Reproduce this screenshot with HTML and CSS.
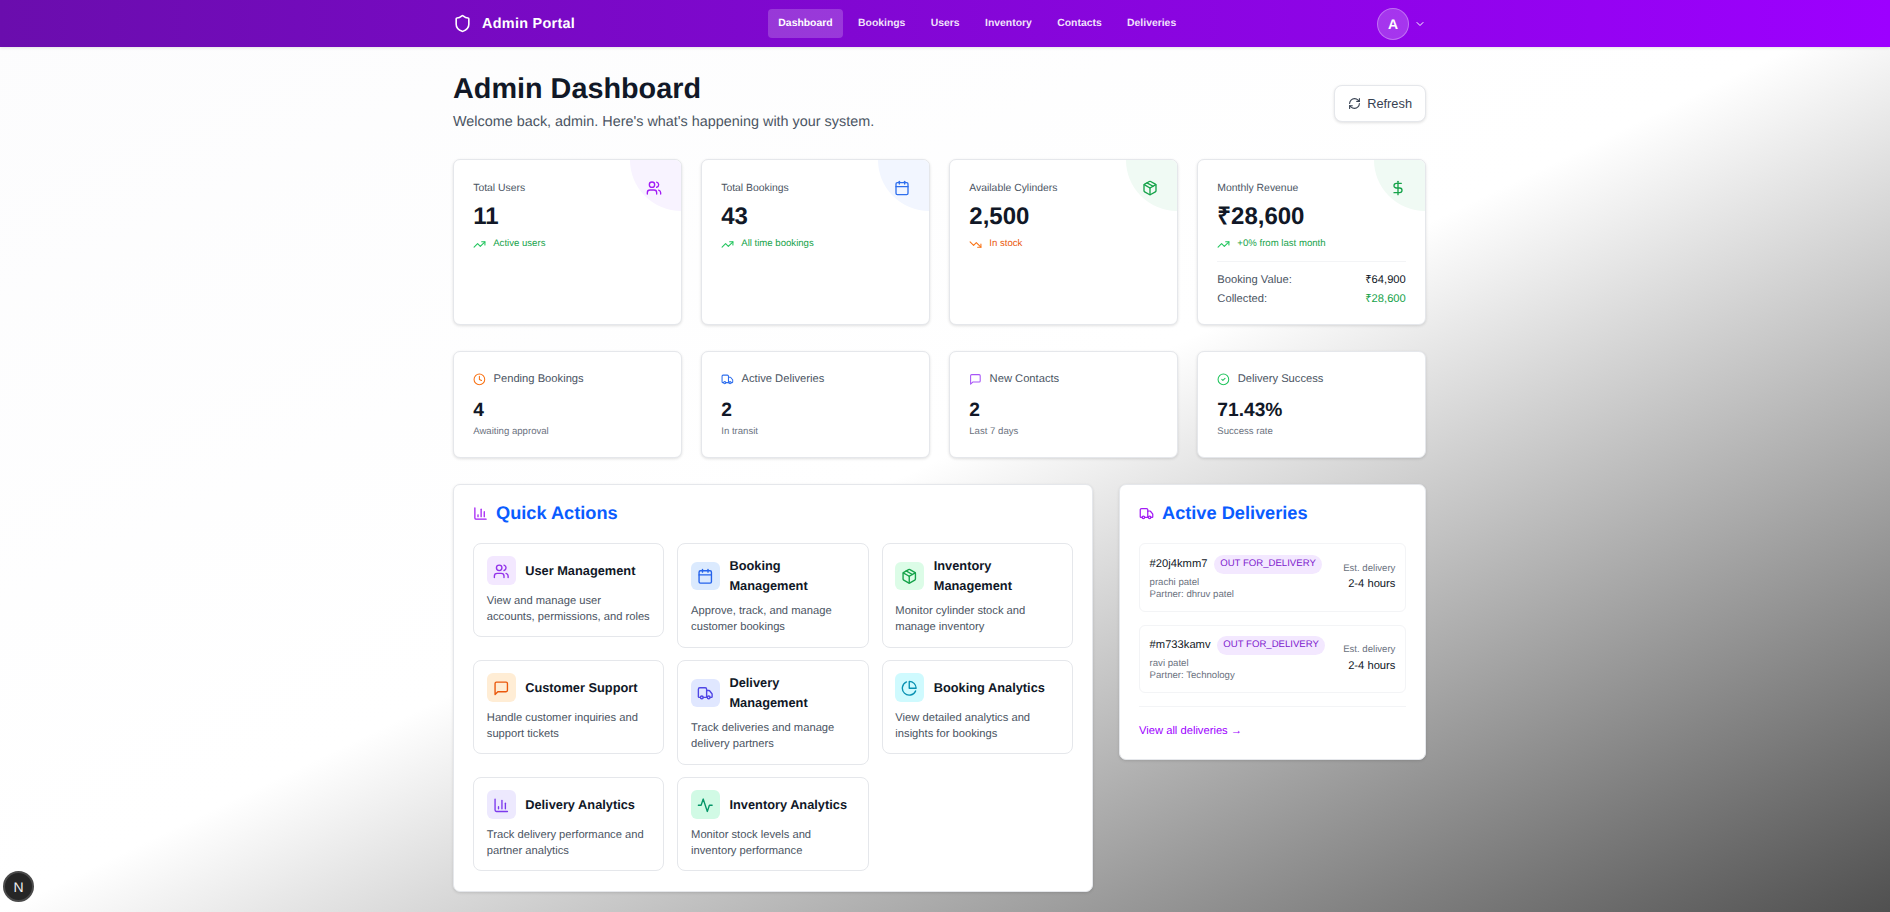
FILE: index.html
```html
<!DOCTYPE html>
<html>
<head>
  <title>Admin Dashboard</title>
  <link rel="stylesheet" href="styles.css">
</head>
<body>
  <svg class="sprite" xmlns="http://www.w3.org/2000/svg">
    <symbol id="i-shield" viewBox="0 0 24 24"><path d="M20 13c0 5-3.5 7.5-7.66 8.95a1 1 0 0 1-.67-.01C7.5 20.5 4 18 4 13V6a1 1 0 0 1 1-1c2 0 4.5-1.2 6.24-2.72a1.17 1.17 0 0 1 1.52 0C14.51 3.81 17 5 19 5a1 1 0 0 1 1 1z"/></symbol>
    <symbol id="i-chevron" viewBox="0 0 24 24"><path d="m6 9 6 6 6-6"/></symbol>
    <symbol id="i-refresh" viewBox="0 0 24 24"><path d="M3 12a9 9 0 0 1 9-9 9.75 9.75 0 0 1 6.74 2.74L21 8"/><path d="M21 3v5h-5"/><path d="M21 12a9 9 0 0 1-9 9 9.75 9.75 0 0 1-6.74-2.74L3 16"/><path d="M8 16H3v5"/></symbol>
    <symbol id="i-users" viewBox="0 0 24 24"><path d="M16 21v-2a4 4 0 0 0-4-4H6a4 4 0 0 0-4 4v2"/><circle cx="9" cy="7" r="4"/><path d="M22 21v-2a4 4 0 0 0-3-3.87"/><path d="M16 3.13a4 4 0 0 1 0 7.75"/></symbol>
    <symbol id="i-calendar" viewBox="0 0 24 24"><path d="M8 2v4"/><path d="M16 2v4"/><rect x="3" y="4" width="18" height="18" rx="2"/><path d="M3 10h18"/></symbol>
    <symbol id="i-package" viewBox="0 0 24 24"><path d="m7.5 4.27 9 5.15"/><path d="M21 8a2 2 0 0 0-1-1.73l-7-4a2 2 0 0 0-2 0l-7 4A2 2 0 0 0 3 8v8a2 2 0 0 0 1 1.73l7 4a2 2 0 0 0 2 0l7-4A2 2 0 0 0 21 16Z"/><path d="m3.3 7 8.7 5 8.7-5"/><path d="M12 22V12"/></symbol>
    <symbol id="i-dollar" viewBox="0 0 24 24"><path d="M12 2v20"/><path d="M17 5H9.5a3.5 3.5 0 0 0 0 7h5a3.5 3.5 0 0 1 0 7H6"/></symbol>
    <symbol id="i-up" viewBox="0 0 24 24"><path d="M22 7l-8.5 8.5-5-5L2 17"/><path d="M16 7h6v6"/></symbol>
    <symbol id="i-down" viewBox="0 0 24 24"><path d="M22 17l-8.5-8.5-5 5L2 7"/><path d="M16 17h6v-6"/></symbol>
    <symbol id="i-clock" viewBox="0 0 24 24"><circle cx="12" cy="12" r="10"/><path d="M12 6v6l4 2"/></symbol>
    <symbol id="i-truck" viewBox="0 0 24 24"><path d="M14 18V6a2 2 0 0 0-2-2H4a2 2 0 0 0-2 2v11a1 1 0 0 0 1 1h2"/><path d="M15 18H9"/><path d="M19 18h2a1 1 0 0 0 1-1v-3.65a1 1 0 0 0-.22-.624l-3.48-4.35A1 1 0 0 0 17.52 8H14"/><circle cx="17" cy="18" r="2"/><circle cx="7" cy="18" r="2"/></symbol>
    <symbol id="i-message" viewBox="0 0 24 24"><path d="M21 15a2 2 0 0 1-2 2H7l-4 4V5a2 2 0 0 1 2-2h14a2 2 0 0 1 2 2z"/></symbol>
    <symbol id="i-check" viewBox="0 0 24 24"><circle cx="12" cy="12" r="10"/><path d="m9 12 2 2 4-4"/></symbol>
    <symbol id="i-bars" viewBox="0 0 24 24"><path d="M3 3v16a2 2 0 0 0 2 2h16"/><path d="M18 17V9"/><path d="M13 17V5"/><path d="M8 17v-3"/></symbol>
    <symbol id="i-pie" viewBox="0 0 24 24"><path d="M21.21 15.89A10 10 0 1 1 8 2.83"/><path d="M22 12A10 10 0 0 0 12 2v10z"/></symbol>
    <symbol id="i-activity" viewBox="0 0 24 24"><path d="M22 12h-4l-3 9L9 3l-3 9H2"/></symbol>
  </svg>

  <header class="topbar">
    <div class="topbar-inner">
      <div class="brand">
        <svg class="icon brand-icon"><use href="#i-shield"/></svg>
        <span>Admin Portal</span>
      </div>
      <nav class="nav">
        <a class="nav-link active">Dashboard</a>
        <a class="nav-link">Bookings</a>
        <a class="nav-link">Users</a>
        <a class="nav-link">Inventory</a>
        <a class="nav-link">Contacts</a>
        <a class="nav-link">Deliveries</a>
      </nav>
      <div class="account">
        <div class="avatar">A</div>
        <svg class="icon chevron"><use href="#i-chevron"/></svg>
      </div>
    </div>
  </header>

  <main class="main">
    <div class="page-head">
      <div>
        <h1>Admin Dashboard</h1>
        <p class="welcome">Welcome back, admin. Here's what's happening with your system.</p>
      </div>
      <button class="refresh">
        <svg class="icon"><use href="#i-refresh"/></svg>
        Refresh
      </button>
    </div>

    <section class="stats">
      <div class="card stat">
        <div class="corner c-purple"></div>
        <div class="stat-top">
          <span class="stat-label">Total Users</span>
          <svg class="icon stat-icon t-purple"><use href="#i-users"/></svg>
        </div>
        <div class="stat-value">11</div>
        <div class="trend good"><svg class="icon t-green"><use href="#i-up"/></svg>Active users</div>
      </div>
      <div class="card stat">
        <div class="corner c-blue"></div>
        <div class="stat-top">
          <span class="stat-label">Total Bookings</span>
          <svg class="icon stat-icon t-blue"><use href="#i-calendar"/></svg>
        </div>
        <div class="stat-value">43</div>
        <div class="trend good"><svg class="icon t-green"><use href="#i-up"/></svg>All time bookings</div>
      </div>
      <div class="card stat">
        <div class="corner c-green"></div>
        <div class="stat-top">
          <span class="stat-label">Available Cylinders</span>
          <svg class="icon stat-icon t-darkgreen"><use href="#i-package"/></svg>
        </div>
        <div class="stat-value">2,500</div>
        <div class="trend bad"><svg class="icon t-orange"><use href="#i-down"/></svg>In stock</div>
      </div>
      <div class="card stat">
        <div class="corner c-green"></div>
        <div class="stat-top">
          <span class="stat-label">Monthly Revenue</span>
          <svg class="icon stat-icon t-darkgreen"><use href="#i-dollar"/></svg>
        </div>
        <div class="stat-value">₹28,600</div>
        <div class="trend good"><svg class="icon t-green"><use href="#i-up"/></svg>+0% from last month</div>
        <div class="revenue">
          <div class="revenue-row"><span>Booking Value:</span><span class="amount">₹64,900</span></div>
          <div class="revenue-row"><span>Collected:</span><span class="amount collected">₹28,600</span></div>
        </div>
      </div>
    </section>

    <section class="stats">
      <div class="card mini">
        <div class="mini-label"><svg class="icon t-orange"><use href="#i-clock"/></svg>Pending Bookings</div>
        <div class="mini-value">4</div>
        <div class="mini-note">Awaiting approval</div>
      </div>
      <div class="card mini">
        <div class="mini-label"><svg class="icon t-blue"><use href="#i-truck"/></svg>Active Deliveries</div>
        <div class="mini-value">2</div>
        <div class="mini-note">In transit</div>
      </div>
      <div class="card mini">
        <div class="mini-label"><svg class="icon t-lilac"><use href="#i-message"/></svg>New Contacts</div>
        <div class="mini-value">2</div>
        <div class="mini-note">Last 7 days</div>
      </div>
      <div class="card mini">
        <div class="mini-label"><svg class="icon t-green"><use href="#i-check"/></svg>Delivery Success</div>
        <div class="mini-value">71.43%</div>
        <div class="mini-note">Success rate</div>
      </div>
    </section>

    <section class="lower">
      <div class="card panel panel-wide">
        <h2 class="panel-title"><svg class="icon t-purple"><use href="#i-bars"/></svg>Quick Actions</h2>
        <div class="actions">
          <div class="action">
            <div class="action-head">
              <div class="action-icon a-purple"><svg class="icon"><use href="#i-users"/></svg></div>
              <h3>User Management</h3>
            </div>
            <p>View and manage user accounts, permissions, and roles</p>
          </div>
          <div class="action">
            <div class="action-head">
              <div class="action-icon a-blue"><svg class="icon"><use href="#i-calendar"/></svg></div>
              <h3>Booking Management</h3>
            </div>
            <p>Approve, track, and manage customer bookings</p>
          </div>
          <div class="action">
            <div class="action-head">
              <div class="action-icon a-green"><svg class="icon"><use href="#i-package"/></svg></div>
              <h3>Inventory Management</h3>
            </div>
            <p>Monitor cylinder stock and manage inventory</p>
          </div>
          <div class="action">
            <div class="action-head">
              <div class="action-icon a-orange"><svg class="icon"><use href="#i-message"/></svg></div>
              <h3>Customer Support</h3>
            </div>
            <p>Handle customer inquiries and support tickets</p>
          </div>
          <div class="action">
            <div class="action-head">
              <div class="action-icon a-indigo"><svg class="icon"><use href="#i-truck"/></svg></div>
              <h3>Delivery Management</h3>
            </div>
            <p>Track deliveries and manage delivery partners</p>
          </div>
          <div class="action">
            <div class="action-head">
              <div class="action-icon a-cyan"><svg class="icon"><use href="#i-pie"/></svg></div>
              <h3>Booking Analytics</h3>
            </div>
            <p>View detailed analytics and insights for bookings</p>
          </div>
          <div class="action">
            <div class="action-head">
              <div class="action-icon a-violet"><svg class="icon"><use href="#i-bars"/></svg></div>
              <h3>Delivery Analytics</h3>
            </div>
            <p>Track delivery performance and partner analytics</p>
          </div>
          <div class="action">
            <div class="action-head">
              <div class="action-icon a-mint"><svg class="icon"><use href="#i-activity"/></svg></div>
              <h3>Inventory Analytics</h3>
            </div>
            <p>Monitor stock levels and inventory performance</p>
          </div>
        </div>
      </div>

      <div class="card panel">
        <h2 class="panel-title"><svg class="icon t-purple"><use href="#i-truck"/></svg>Active Deliveries</h2>
        <div class="deliveries">
          <div class="delivery">
            <div>
              <div class="delivery-top"><span class="delivery-id">#20j4kmm7</span><span class="pill">OUT FOR_DELIVERY</span></div>
              <div class="delivery-meta">prachi patel</div>
              <div class="delivery-meta">Partner: dhruv patel</div>
            </div>
            <div class="eta">
              <div class="eta-label">Est. delivery</div>
              <div class="eta-value">2-4 hours</div>
            </div>
          </div>
          <div class="delivery">
            <div>
              <div class="delivery-top"><span class="delivery-id">#m733kamv</span><span class="pill">OUT FOR_DELIVERY</span></div>
              <div class="delivery-meta">ravi patel</div>
              <div class="delivery-meta">Partner: Technology</div>
            </div>
            <div class="eta">
              <div class="eta-label">Est. delivery</div>
              <div class="eta-value">2-4 hours</div>
            </div>
          </div>
        </div>
        <div class="view-all"><a>View all deliveries →</a></div>
      </div>
    </section>
  </main>

  <div class="dev-badge">N</div>
</body>
</html>
```

FILE: styles.css
```css
html {
  font-size: 12.8px;
}

body {
  margin: 0;
  min-height: 912px;
  box-sizing: border-box;
  padding-right: 11px;
  font-family: "Liberation Sans", Arial, sans-serif;
  text-rendering: geometricPrecision;
  color: #111827;
  background: linear-gradient(to bottom right, #fcfcfd 0%, #ffffff 50%, #505050 100%);
  overflow: hidden;
}

h1, h2, h3, p {
  margin: 0;
}

.sprite {
  display: none;
}

.icon {
  width: 1rem;
  height: 1rem;
  fill: none;
  stroke: currentColor;
  stroke-width: 2;
  stroke-linecap: round;
  stroke-linejoin: round;
  flex-shrink: 0;
}

.t-purple { color: #a21cf5; }
.t-lilac { color: #a855f7; }
.t-blue { color: #2f6fed; }
.t-green { color: #22c55e; }
.t-darkgreen { color: #16a34a; }
.t-orange { color: #f97316; }

/* top bar */
.topbar {
  height: 47px;
  margin-right: -11px;
  padding-right: 11px;
  background: linear-gradient(90deg, #6a0dad, #9d00ff);
  box-shadow: 0 1px 3px rgba(0, 0, 0, 0.1);
  color: #fff;
}

.topbar-inner {
  width: 973px;
  height: 100%;
  margin: 0 auto;
  display: flex;
  align-items: center;
  justify-content: space-between;
}

.brand {
  display: flex;
  align-items: center;
  gap: 10px;
  font-size: 14.4px;
  font-weight: bold;
  letter-spacing: 0.3px;
}

.brand-icon {
  width: 19px;
  height: 19px;
}

.nav {
  display: flex;
  align-items: center;
  gap: 5.4px;
  margin-left: 2.4px;
}

.nav-link {
  padding: 0 10px;
  height: 29px;
  line-height: 30px;
  border-radius: 4px;
  font-size: 10.4px;
  font-weight: bold;
  color: rgba(255, 255, 255, 0.9);
}

.nav-link.active {
  background: rgba(255, 255, 255, 0.2);
  color: #fff;
}

.account {
  display: flex;
  align-items: center;
  gap: 5px;
}

.avatar {
  box-sizing: border-box;
  width: 32px;
  height: 32px;
  border-radius: 50%;
  border: 1px solid rgba(255, 255, 255, 0.3);
  background: rgba(255, 255, 255, 0.2);
  display: flex;
  align-items: center;
  justify-content: center;
  font-size: 14px;
  font-weight: bold;
}

.chevron {
  width: 12px;
  height: 12px;
}

/* page */
.main {
  width: 973px;
  margin: 0 auto;
  padding-top: 24.5px;
}

.page-head {
  display: flex;
  align-items: center;
  justify-content: space-between;
  margin-bottom: 26.5px;
}

h1 {
  font-size: 28.8px;
  line-height: 34.6px;
  font-weight: bold;
  color: #111827;
}

.welcome {
  margin-top: 6px;
  font-size: 14.4px;
  line-height: 20px;
  color: #4b5563;
}

.refresh {
  display: flex;
  align-items: center;
  gap: 6px;
  height: 36.5px;
  padding: 0 13px;
  margin-top: 3px;
  border: 1px solid #e5e7eb;
  border-radius: 8px;
  background: #fff;
  box-shadow: 0 1px 3px rgba(0, 0, 0, 0.12);
  font-family: inherit;
  font-size: 12.8px;
  color: #374151;
}

.refresh .icon {
  width: 13px;
  height: 13px;
}

.card {
  box-sizing: border-box;
  background: #fff;
  border: 1px solid #e5e7eb;
  border-radius: 7px;
  box-shadow: 0 1px 3px rgba(0, 0, 0, 0.12);
}

.stats {
  display: grid;
  grid-template-columns: repeat(4, 1fr);
  gap: 1.5rem;
  margin-bottom: 26px;
}

.stat {
  position: relative;
  overflow: hidden;
  padding: 20.6px 19.2px 17.4px;
}

.corner {
  position: absolute;
  top: 0;
  right: 0;
  width: 4rem;
  height: 4rem;
  border-bottom-left-radius: 100%;
}

.c-purple { background: #f8f3ff; }
.c-blue { background: #f2f6ff; }
.c-green { background: #f0faf4; }

.stat-top {
  position: relative;
  display: flex;
  align-items: center;
  justify-content: space-between;
  height: 16px;
}

.stat-label {
  font-size: 10.4px;
  color: #4b5563;
}

.stat-icon {
  width: 16px;
  height: 16px;
}

.stat-value {
  margin-top: 5.5px;
  font-size: 24px;
  line-height: 29px;
  font-weight: bold;
}

.trend {
  display: flex;
  align-items: center;
  gap: 7px;
  margin-top: 6.9px;
  font-size: 9.6px;
  line-height: 12.8px;
}

.trend .icon {
  width: 13px;
  height: 13px;
}

.good { color: #16a34a; }
.bad { color: #ea580c; }

.revenue {
  margin-top: 10px;
  padding-top: 10.5px;
  border-top: 1px solid #f3f4f6;
  display: flex;
  flex-direction: column;
  gap: 3px;
}

.revenue-row {
  display: flex;
  justify-content: space-between;
  font-size: 11.2px;
  line-height: 16px;
  color: #4b5563;
}

.amount {
  color: #111827;
}

.amount.collected {
  color: #16a34a;
}

.mini {
  padding: 20px 19.2px 18px;
}

.mini-label {
  display: flex;
  align-items: center;
  gap: 7.5px;
  font-size: 11.2px;
  line-height: 14px;
  color: #4b5563;
}

.mini-label .icon {
  width: 12.8px;
  height: 12.8px;
}

.mini-value {
  margin-top: 14px;
  font-size: 19.2px;
  line-height: 22px;
  font-weight: bold;
}

.mini-note {
  margin-top: 4px;
  font-size: 9.6px;
  line-height: 12.8px;
  color: #6b7280;
}

/* lower panels */
.lower {
  display: grid;
  grid-template-columns: repeat(3, 1fr);
  gap: 26px;
  align-items: start;
}

.panel {
  padding: 19px;
}

.panel-wide {
  grid-column: span 2;
  padding-bottom: 20px;
}

.panel-title {
  display: flex;
  align-items: center;
  gap: 8px;
  margin-bottom: 20px;
  font-size: 18.2px;
  line-height: 19.2px;
  font-weight: bold;
  color: #0a5cff;
}

.panel-title .icon {
  width: 15px;
  height: 15px;
}

.actions {
  display: grid;
  grid-template-columns: repeat(3, 1fr);
  gap: 12.9px 12.8px;
  align-items: start;
}

.action {
  box-sizing: border-box;
  padding: 12px 12.8px 11.5px;
  border: 1px solid #e5e7eb;
  border-radius: 8px;
  background: #fff;
}

.action-head {
  display: flex;
  align-items: center;
  gap: 9.6px;
  margin-bottom: 7.4px;
}

.action-head h3 {
  font-size: 12.8px;
  line-height: 19.6px;
  font-weight: bold;
  color: #111827;
}

.action-icon {
  width: 28.8px;
  height: 28.8px;
  border-radius: 6px;
  display: flex;
  align-items: center;
  justify-content: center;
  flex-shrink: 0;
}

.action-icon .icon {
  width: 16.5px;
  height: 16.5px;
}

.action p {
  font-size: 11.2px;
  line-height: 16px;
  color: #4b5563;
}

.a-purple { background: #f3e8ff; color: #9333ea; }
.a-blue { background: #dbeafe; color: #2563eb; }
.a-green { background: #dcfce7; color: #16a34a; }
.a-orange { background: #ffedd5; color: #ea580c; }
.a-indigo { background: #e0e7ff; color: #4f46e5; }
.a-cyan { background: #cffafe; color: #0891b2; }
.a-violet { background: #ede9fe; color: #7c3aed; }
.a-mint { background: #d1fae5; color: #059669; }

.deliveries {
  display: flex;
  flex-direction: column;
  gap: 12.8px;
}

.delivery {
  display: flex;
  align-items: center;
  justify-content: space-between;
  padding: 10.1px 9.6px;
  border: 1px solid #f3f4f6;
  border-radius: 6px;
}

.delivery-top {
  display: flex;
  align-items: center;
  gap: 6.4px;
  margin-bottom: 3px;
}

.delivery-id {
  font-size: 11.2px;
}

.pill {
  padding: 3.2px 6.4px;
  border-radius: 10px;
  background: #f3e8ff;
  color: #7e22ce;
  font-size: 9.6px;
  line-height: 12.8px;
}

.delivery-meta {
  font-size: 9.6px;
  line-height: 12px;
  color: #6b7280;
}

.eta {
  text-align: right;
}

.eta-label {
  font-size: 9.6px;
  line-height: 12px;
  color: #6b7280;
}

.eta-value {
  margin-top: 1.5px;
  font-size: 11.2px;
  line-height: 16px;
  color: #111827;
}

.view-all {
  margin-top: 13px;
  margin-bottom: 2px;
  padding-top: 17px;
  border-top: 1px solid #f3f4f6;
  font-size: 11.2px;
  line-height: 14px;
  color: #9d00ff;
}

/* framework dev badge, floats over the page */
.dev-badge {
  position: fixed;
  left: 3px;
  bottom: 10px;
  box-sizing: border-box;
  width: 31px;
  height: 31px;
  border-radius: 50%;
  border: 2px solid #4a4a4a;
  background: #262626;
  color: #f2f2f2;
  display: flex;
  align-items: center;
  justify-content: center;
  font-size: 14px;
}
```
